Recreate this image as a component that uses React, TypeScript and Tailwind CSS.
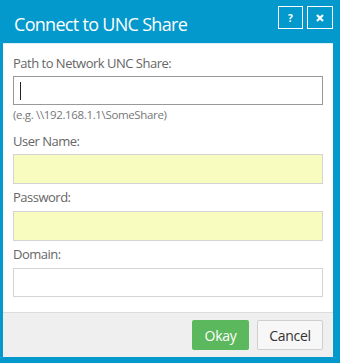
import React from "react";

const font = { fontFamily: '"Open Sans", "Liberation Sans", sans-serif' };

function Label({ children }: { children: React.ReactNode }) {
  return <div className="text-[13px] leading-[18px] tracking-[-0.5px] text-[#666]">{children}</div>;
}

export default function App() {
  return (
    <div className="w-[340px] h-[364px] bg-[#fafafa]" style={font}>
      <div className="h-[363px] bg-[#0399cc] pl-[3px] pr-[7px] pb-[6px] flex flex-col">
        {/* title bar */}
        <div className="h-[43px] flex items-start shrink-0">
          <div className="pl-[11px] pt-[12px] text-[18px] leading-[24px] tracking-[-0.7px] text-white">
            Connect to UNC Share
          </div>
          <div className="ml-auto mt-[6px] flex gap-[4px]">
            <button className="w-[25px] h-[23px] border border-white flex items-center justify-center">
              <span className="text-[10px] leading-none font-bold text-white">?</span>
            </button>
            <button className="w-[26px] h-[23px] border border-white flex items-center justify-center">
              <svg width="8" height="8" viewBox="0 0 8 8">
                <path d="M1 1L7 7M7 1L1 7" stroke="white" strokeWidth="2.2" />
              </svg>
            </button>
          </div>
        </div>

        {/* body */}
        <div className="flex-1 bg-white border-t border-[#d9eef6] px-[10px] pt-[10px] flex flex-col">
          <Label>Path to Network UNC Share:</Label>
          <div className="mt-[4px] h-[29px] border border-[#999] flex items-center pl-[6px]">
            <div className="w-[1px] h-[18px] bg-[#222]" />
          </div>
          <div className="mt-[2px] text-[11.5px] leading-[16px] tracking-[-0.35px] text-[#777]">
            (e.g. \\192.168.1.1\SomeShare)
          </div>

          <div className="mt-[9px]">
            <Label>User Name:</Label>
          </div>
          <div className="mt-[4px] h-[30px] border border-[#d4d4d4] bg-[#f9fcbf]" />

          <div className="mt-[4px]">
            <Label>Password:</Label>
          </div>
          <div className="mt-[5px] h-[30px] border border-[#d4d4d4] bg-[#f9fcbf]" />

          <div className="mt-[4px]">
            <Label>Domain:</Label>
          </div>
          <div className="mt-[5px] h-[29px] border border-[#d4d4d4] bg-white" />
        </div>

        {/* footer */}
        <div className="h-[45px] shrink-0 bg-[#efefef] border-t border-[#dcdcdc] flex items-center justify-end gap-[8px] pr-[10px]">
          <button className="w-[57px] h-[30px] rounded-[2px] bg-[#5cb85c] text-white text-[14px] tracking-[-0.3px]">
            Okay
          </button>
          <button className="w-[66px] h-[30px] rounded-[2px] bg-[#f7f7f7] border border-[#cfcfcf] text-[#333] text-[14px] tracking-[-0.3px]">
            Cancel
          </button>
        </div>
      </div>
    </div>
  );
}
